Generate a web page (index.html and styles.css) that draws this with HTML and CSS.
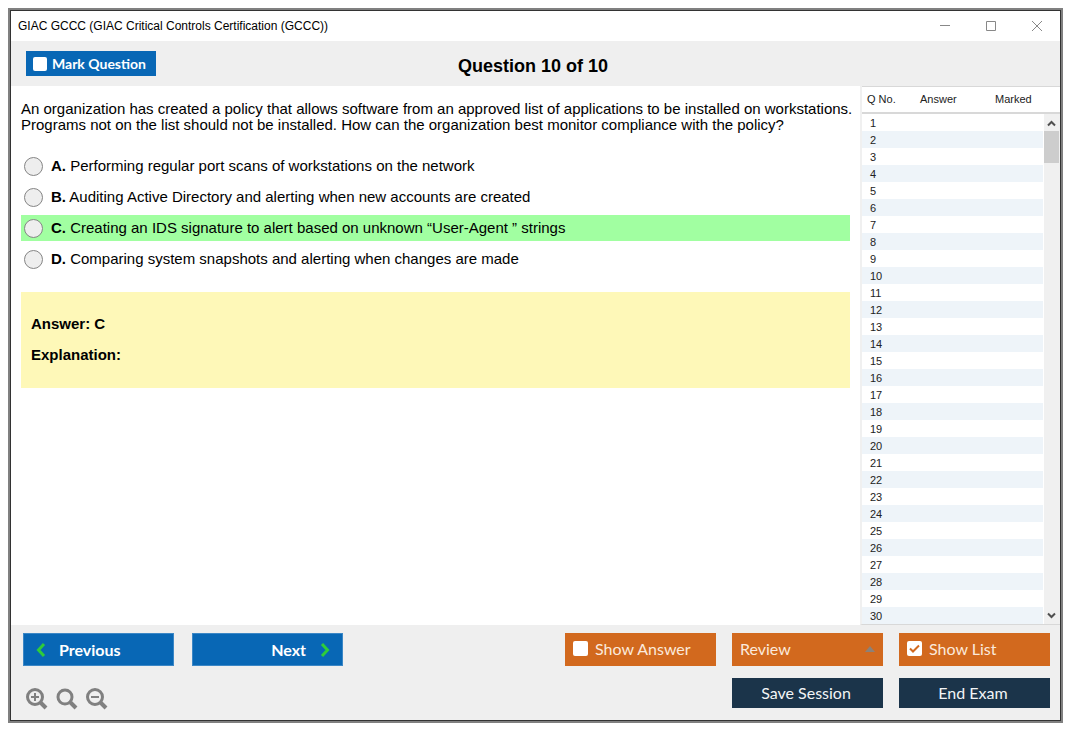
FILE: index.html
```html
<!DOCTYPE html>
<html lang="en">
<head>
    <meta charset="UTF-8">
    <meta name="viewport" content="width=device-width, initial-scale=1.0">
    <title>GIAC GCCC (GIAC Critical Controls Certification (GCCC))</title>
    <link rel="stylesheet" href="styles.css">
</head>
<body>

    <div class="window">
        <div class="titlebar">
            <div class="title">GIAC GCCC (GIAC Critical Controls Certification (GCCC))</div>
            <div class="window-controls">
                <button type="button" aria-label="Minimize"><svg width="12" height="12" viewBox="0 0 12 12"><path d="M1 5.500h10"/></svg></button>
                <button type="button" aria-label="Maximize"><svg width="12" height="12" viewBox="0 0 12 12"><path d="M1.500 1.500h9v9h-9z"/></svg></button>
                <button type="button" aria-label="Close"><svg width="12" height="12" viewBox="0 0 12 12"><path d="M1 1l10 10M11 1L1 11"/></svg></button>
            </div>
        </div>

        <div class="header">
            <label class="mark"><input type="checkbox" class="check"> Mark Question</label>
            <h1>Question 10 of 10</h1>
        </div>

        <div class="content">
            <div class="question">
                <p class="question-text">An organization has created a policy that allows software from an approved list of applications to be installed on workstations. Programs not on the list should not be installed. How can the organization best monitor compliance with the policy?</p>

                <div class="options">
                    <label class="option"><input type="radio" name="answer"><span><b>A.</b> Performing regular port scans of workstations on the network</span></label>
                    <label class="option"><input type="radio" name="answer"><span><b>B.</b> Auditing Active Directory and alerting when new accounts are created</span></label>
                    <label class="option correct"><input type="radio" name="answer"><span><b>C.</b> Creating an IDS signature to alert based on unknown “User-Agent ” strings</span></label>
                    <label class="option"><input type="radio" name="answer"><span><b>D.</b> Comparing system snapshots and alerting when changes are made</span></label>
                </div>

                <div class="explanation">
                    <p>Answer: C</p>
                    <p>Explanation:</p>
                </div>
            </div>

            <div class="list">
                <table class="list-table">
                    <thead>
                        <tr><th class="col-no">Q No.</th><th class="col-answer">Answer</th><th class="col-marked">Marked</th></tr>
                    </thead>
                    <tbody id="question-list"></tbody>
                </table>
                <div class="scrollbar">
                    <svg width="16" height="17" viewBox="0 0 16 17"><path d="M4 11.500L7.500 8l3.500 3.500"/></svg>
                    <div class="thumb"></div>
                    <svg class="down" width="16" height="17" viewBox="0 0 16 17"><path d="M4 6.500L7.500 10l3.500-3.500"/></svg>
                </div>
            </div>
        </div>

        <div class="footer">
            <div class="footer-left">
                <div class="buttons">
                    <button type="button" class="btn nav prev"><svg width="10" height="16" viewBox="0 0 10 16"><path d="M8 2L2.500 8L8 14"/></svg>Previous</button>
                    <button type="button" class="btn nav next">Next<svg width="10" height="16" viewBox="0 0 10 16"><path d="M2 2l5.500 6L2 14"/></svg></button>
                </div>
                <div class="zoom">
                    <button type="button" aria-label="Zoom in"><svg width="22" height="22" viewBox="0 0 22 22"><circle cx="9" cy="9" r="7.500"/><path class="handle" d="M14.500 14.500l5.500 5.500"/><path class="sign" d="M5 9h8M9 5v8"/></svg></button>
                    <button type="button" aria-label="Reset zoom"><svg width="22" height="22" viewBox="0 0 22 22"><circle class="thick" cx="9" cy="9" r="7"/><path class="handle" d="M14.500 14.500l5.500 5.500"/></svg></button>
                    <button type="button" aria-label="Zoom out"><svg width="22" height="22" viewBox="0 0 22 22"><circle cx="9" cy="9" r="7.500"/><path class="handle" d="M14.500 14.500l5.500 5.500"/><path class="sign" d="M5 9h8"/></svg></button>
                </div>
            </div>
            <div class="footer-right">
                <div class="buttons">
                    <label class="btn orange"><input type="checkbox" class="check"> Show Answer</label>
                    <button type="button" class="btn orange review">Review<svg width="10" height="6" viewBox="0 0 10 6"><path d="M5 0l5 6H0z"/></svg></button>
                    <label class="btn orange"><input type="checkbox" class="check" checked> Show List</label>
                </div>
                <div class="buttons">
                    <button type="button" class="btn dark">Save Session</button>
                    <button type="button" class="btn dark">End Exam</button>
                </div>
            </div>
        </div>
    </div>

    <script>
        var rows = "";
        for (var i = 1; i <= 30; i++) {
            rows += "<tr><td>" + i + "</td><td></td><td></td></tr>";
        }
        document.getElementById("question-list").innerHTML = rows;
    </script>

</body>
</html>
```
FILE: styles.css
```css
* {
    box-sizing: border-box;
}

body {
    margin: 0;
    padding: 8px 12px 12px 8px;
    min-height: 100vh;
    display: flex;
    background-color: #fff;
    color: #000;
    font-family: "Liberation Sans", Arial, sans-serif;
}

button {
    font-family: inherit;
    background: none;
    border: none;
    padding: 0;
}

svg {
    display: block;
    fill: none;
}

.window {
    flex: 1;
    display: flex;
    flex-direction: column;
    border: 2px solid #808080;
    outline: 1px solid #333;
    outline-offset: -3px;
    padding: 1px;
}

.titlebar {
    height: 30px;
    display: flex;
    align-items: center;
    justify-content: space-between;
    padding: 0 17px 0 7px;
    font-size: 12px;
}

.window-controls {
    display: flex;
    gap: 34px;
}

.window-controls svg {
    stroke: #888;
}

/* question header */
.header {
    height: 45px;
    display: grid;
    grid-template-columns: 1fr auto 1fr;
    align-items: center;
    padding: 0 15px;
    background-color: #efefef;
}

.header h1 {
    margin: 0;
    padding: 4px 5px 0 0;
    font-size: 18px;
    line-height: 20px;
}

.mark {
    justify-self: start;
    display: flex;
    align-items: center;
    gap: 5px;
    width: 130px;
    height: 25px;
    padding-left: 7px;
    background-color: #0867b5;
    color: #fff;
    font-family: Lato, sans-serif;
    font-size: 14px;
    font-weight: bold;
    white-space: nowrap;
}

.check {
    appearance: none;
    flex: none;
    width: 14px;
    height: 14px;
    margin: 0;
    background-color: #fff;
    border-radius: 2px;
}

/* main area */
.content {
    flex: 1;
    display: flex;
}

.question {
    flex: 1;
    padding: 15px 0 0 10px;
    font-size: 15px;
    line-height: 16px;
}

.question-text {
    margin: 0 0 20px;
}

.options {
    display: flex;
    flex-direction: column;
    gap: 5px;
    margin-right: 10px;
}

.option {
    display: flex;
    align-items: center;
    gap: 8px;
    height: 26px;
    padding-left: 3px;
}

.option input {
    appearance: none;
    width: 19px;
    height: 19px;
    margin: 0;
    border: 1px solid #858585;
    border-radius: 50%;
    background-color: #eee;
}

.correct {
    background-color: #a1ffa1;
}

.explanation {
    margin: 20px 10px 0 0;
    padding: 24px 10px 25px;
    background-color: #fef8b8;
    font-weight: bold;
}

.explanation p {
    margin: 0;
}

.explanation p + p {
    margin-top: 15px;
}

/* question list */
.list {
    position: relative;
    width: 200px;
    border-left: 2px solid #f0f0f0;
    border-bottom: 1px solid #d8d8d8;
    color: #222;
    font-size: 11px;
}

.list-table {
    width: 100%;
    table-layout: fixed;
    border-collapse: separate;
    border-spacing: 0;
}

.list-table th {
    height: 28px;
    padding: 0 0 2px;
    border-top: 1px solid #d8d8d8;
    border-bottom: 2px solid #d8d8d8;
    font-weight: normal;
    text-align: left;
}

.list-table .col-no {
    width: 58px;
    padding-left: 5px;
}

.list-table .col-answer {
    width: 75px;
}

.list-table td {
    height: 17px;
    padding: 2px 0 0;
    line-height: 15px;
}

.list-table td:first-child {
    padding-left: 8px;
}

.list-table tbody tr:nth-child(even) {
    background-color: #eef4f9;
}

.scrollbar {
    position: absolute;
    top: 28px;
    right: 0;
    bottom: 0;
    width: 17px;
    display: flex;
    flex-direction: column;
    background-color: #f0f0f0;
    border-left: 1px solid #fff;
}

.scrollbar svg {
    stroke: #505050;
    stroke-width: 2;
}

.thumb {
    width: 15px;
    height: 32px;
    background-color: #cdcdcd;
}

.scrollbar .down {
    margin-top: auto;
}

/* footer */
.footer {
    display: flex;
    justify-content: space-between;
    padding: 8px 10px 10px 12px;
    background-color: #efefef;
}

.footer-right {
    display: flex;
    flex-direction: column;
    align-items: flex-end;
    gap: 12px;
}

.buttons {
    display: flex;
    gap: 16px;
}

.footer-left .buttons {
    gap: 18px;
}

.btn {
    display: flex;
    align-items: center;
    width: 151px;
    height: 33px;
    color: #fff;
    font-family: Lato, sans-serif;
    font-size: 16px;
}

.nav {
    background-color: #0867b5;
    border: 1px solid #3b87c6;
    font-weight: bold;
}

.nav svg {
    stroke: #2fcc3a;
    stroke-width: 3;
}

.prev {
    gap: 13px;
    padding-left: 12px;
}

.next {
    justify-content: flex-end;
    gap: 14px;
    padding-right: 12px;
}

.orange {
    gap: 7px;
    padding: 0 8px 2px;
    background-color: #d2691e;
    color: #fbe9dc;
}

.orange .check {
    width: 15px;
    height: 15px;
}

.orange .check:checked {
    background-image: url("data:image/svg+xml,%3Csvg xmlns='http://www.w3.org/2000/svg' viewBox='0 0 15 15'%3E%3Cpath d='M3 7.500l3 3L12 4.500' fill='none' stroke='%23d2691e' stroke-width='2'/%3E%3C/svg%3E");
}

.review {
    justify-content: space-between;
}

.review svg {
    fill: #8c8178;
}

.dark {
    justify-content: center;
    height: 30px;
    padding: 0 3px 2px 0;
    background-color: #1b344a;
    color: #f2f4f6;
}

.zoom {
    display: flex;
    gap: 8px;
    margin-top: 22px;
    padding-left: 3px;
}

.zoom svg {
    stroke: #808080;
    stroke-width: 3;
}

.zoom .sign {
    stroke-width: 2;
}

.zoom .handle {
    stroke-width: 4;
}
```
